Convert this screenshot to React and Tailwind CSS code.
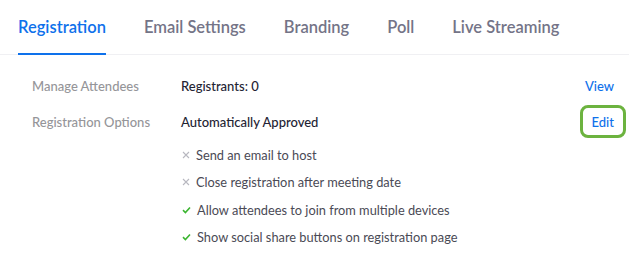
const tabs = ["Registration", "Email Settings", "Branding", "Poll", "Live Streaming"];

const options = [
  { on: false, text: "Send an email to host" },
  { on: false, text: "Close registration after meeting date" },
  { on: true, text: "Allow attendees to join from multiple devices" },
  { on: true, text: "Show social share buttons on registration page" },
];

function Cross() {
  return (
    <svg width="8" height="8" viewBox="0 0 8 8" className="shrink-0">
      <path d="M1 1L7 7M7 1L1 7" stroke="#b8b8c0" strokeWidth="1.1" />
    </svg>
  );
}

function Check() {
  return (
    <svg width="9" height="8" viewBox="0 0 9 8" className="shrink-0">
      <path d="M1 4.2L3.4 6.5L8 1.5" stroke="#3cb531" strokeWidth="1.6" fill="none" />
    </svg>
  );
}

export default function App() {
  return (
    <div className="w-[636px] h-[261px] bg-white overflow-hidden font-['Lato','Noto_Sans',sans-serif]">
      <div className="flex gap-[38px] pl-[18px] mr-[7px] border-b border-[#f0f0f3] h-[55px]">
        {tabs.map((t, i) => (
          <div
            key={t}
            className={
              "pt-[15px] text-[16.5px] font-semibold leading-[24px] h-[55px] " +
              (i === 0
                ? "text-[#0e71eb] border-b-[2px] border-[#0e71eb]"
                : "text-[#747487]")
            }
          >
            {t}
          </div>
        ))}
      </div>

      <div className="pl-[32px] pr-[10px] pt-[14px] text-[13px] font-medium leading-[20px]">
        <div className="flex items-center h-[33px]">
          <div className="w-[149px] text-[#959599]">Manage Attendees</div>
          <div className="flex-1 text-[#232333]">Registrants: 0</div>
          <div className="px-[12px] text-[#0e71eb]">View</div>
        </div>
        <div className="flex items-center h-[33px] mt-[3px]">
          <div className="w-[149px] text-[#959599]">Registration Options</div>
          <div className="flex-1 text-[#232333]">Automatically Approved</div>
          <div className="border-[3px] border-[#6cb33f] rounded-[8px] px-[9px] h-[33px] flex items-center text-[#0e71eb]">
            Edit
          </div>
        </div>
        <div className="ml-[149px] mt-[3px] flex flex-col">
          {options.map((o) => (
            <div key={o.text} className="flex items-center h-[27.5px] gap-[6px] pl-[1px] text-[#4a4a55] text-[12.8px] font-normal">
              {o.on ? <Check /> : <Cross />}
              <span>{o.text}</span>
            </div>
          ))}
        </div>
      </div>
    </div>
  );
}
